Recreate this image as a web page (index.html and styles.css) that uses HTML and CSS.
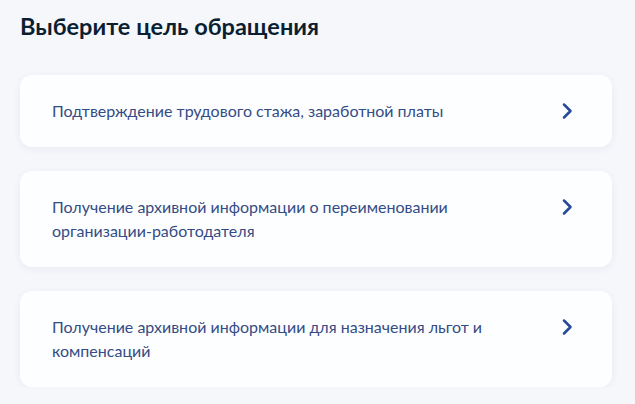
FILE: index.html
```html
<!DOCTYPE html>
<html lang="ru">
<head>
<meta charset="utf-8">
<title>Выберите цель обращения</title>
<link rel="stylesheet" href="styles.css">
</head>
<body>
<main class="page">
  <h1 class="title">Выберите цель обращения</h1>
  <ul class="options">
    <li class="option">
      <span class="option-text">Подтверждение трудового стажа, заработной платы</span>
      <svg class="chevron" viewBox="0 0 24 24" width="24" height="24" aria-hidden="true"><path d="M8 5.5l6.5 6.5-6.5 6.5" fill="none" stroke="currentColor" stroke-width="2.5" stroke-linecap="round" stroke-linejoin="round"/></svg>
    </li>
    <li class="option">
      <span class="option-text">Получение архивной информации о переименовании организации-работодателя</span>
      <svg class="chevron" viewBox="0 0 24 24" width="24" height="24" aria-hidden="true"><path d="M8 5.5l6.5 6.5-6.5 6.5" fill="none" stroke="currentColor" stroke-width="2.5" stroke-linecap="round" stroke-linejoin="round"/></svg>
    </li>
    <li class="option">
      <span class="option-text">Получение архивной информации для назначения льгот и компенсаций</span>
      <svg class="chevron" viewBox="0 0 24 24" width="24" height="24" aria-hidden="true"><path d="M8 5.5l6.5 6.5-6.5 6.5" fill="none" stroke="currentColor" stroke-width="2.5" stroke-linecap="round" stroke-linejoin="round"/></svg>
    </li>
  </ul>
</main>
</body>
</html>
```

FILE: styles.css
```css
html, body {
  margin: 0;
  padding: 0;
  background: #f5f7fb;
}

body {
  font-family: Lato, "Noto Sans", sans-serif;
  color: #0b1f33;
}

.page {
  padding: 10px 23px 0 20px;
}

.title {
  margin: 0;
  font-size: 23.5px;
  line-height: 32px;
  font-weight: 700;
  color: #0b1f33;
}

.options {
  list-style: none;
  margin: 33px 0 0;
  padding: 0;
  display: flex;
  flex-direction: column;
  gap: 24px;
}

.option {
  display: flex;
  align-items: flex-start;
  justify-content: space-between;
  gap: 24px;
  padding: 24px 32px;
  background: #fdfeff;
  border-radius: 12px;
  box-shadow: 0 2px 8px rgba(16, 40, 100, 0.06);
}

.option-text {
  font-size: 16px;
  line-height: 24px;
  color: #344c85;
  max-width: 440px;
}

.chevron {
  flex: none;
  color: #27499b;
}
```
